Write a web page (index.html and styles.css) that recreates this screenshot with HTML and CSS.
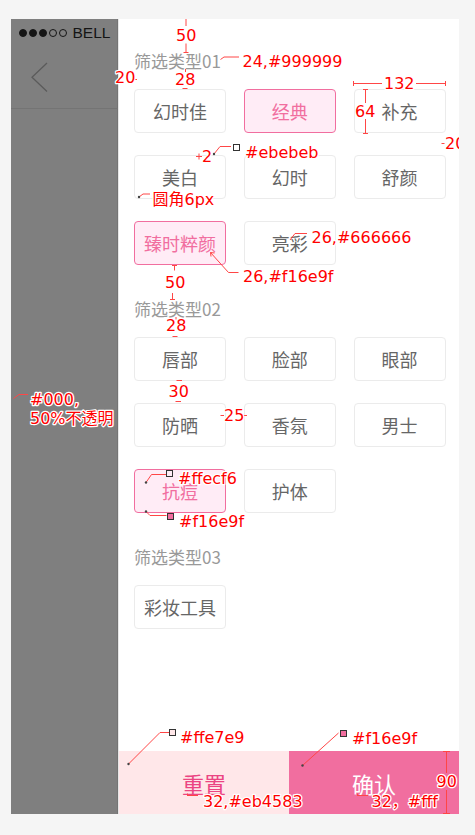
FILE: index.html
```html
<!DOCTYPE html>
<html lang="zh-CN">
<head>
<meta charset="utf-8">
<title>筛选</title>
<link rel="stylesheet" href="styles.css">
</head>
<body>
<div class="screen">
  <div class="backdrop">
    <div class="statusbar">
      <span class="signal"><i class="dot on"></i><i class="dot on"></i><i class="dot on"></i><i class="dot"></i><i class="dot"></i></span>
      <span class="carrier">BELL</span>
    </div>
    <div class="navbar">
      <svg class="back" width="17" height="31" viewBox="0 0 17 31"><polyline points="16,1 1,15.2 16,29.5"/></svg>
    </div>
  </div>

  <div class="panel">
    <div class="filters">
      <section class="group">
        <h3 class="group-title">筛选类型01</h3>
        <div class="chips">
          <span class="chip">幻时佳</span>
          <span class="chip is-active">经典</span>
          <span class="chip">补充</span>
          <span class="chip">美白</span>
          <span class="chip">幻时</span>
          <span class="chip">舒颜</span>
          <span class="chip is-active">臻时粹颜</span>
          <span class="chip">亮彩</span>
        </div>
      </section>
      <section class="group">
        <h3 class="group-title">筛选类型02</h3>
        <div class="chips">
          <span class="chip">唇部</span>
          <span class="chip">脸部</span>
          <span class="chip">眼部</span>
          <span class="chip">防晒</span>
          <span class="chip">香氛</span>
          <span class="chip">男士</span>
          <span class="chip is-active">抗痘</span>
          <span class="chip">护体</span>
        </div>
      </section>
      <section class="group">
        <h3 class="group-title">筛选类型03</h3>
        <div class="chips">
          <span class="chip">彩妆工具</span>
        </div>
      </section>
    </div>
    <div class="actions">
      <button class="btn btn-reset" type="button">重置</button>
      <button class="btn btn-confirm" type="button">确认</button>
    </div>
  </div>

  <svg class="notes" width="448" height="795" viewBox="11 19 448 795" aria-hidden="true">
    <g class="ln">
      <path d="M186 19V26M186 43.5V52.5M183.5 52.5H188.5"/>
      <path d="M220.5 59.5L224 57H239"/>
      <path d="M133.5 79.5H137"/>
      <path d="M185.5 69V72M182.5 88.5H187.5"/>
      <path d="M353.5 83.5H382M416 83.5H445.5M353.5 81V86M445.5 81V86"/>
      <path d="M365.5 89.5V103M365.5 119V133.5M363 89.5H368M363 133.5H368"/>
      <path d="M441.5 143.5H444.5"/>
      <path d="M196 156.5H202M199 153.5V159.5"/>
      <path d="M214 154L220 146.5H231"/>
      <path d="M139 197L143 194H150"/>
      <path d="M290 240L295 233.5H307"/>
      <path d="M210.5 252.5L228.5 272.5H238.5M210.5 252.5L211 256.5M210.5 252.5L214.5 253"/>
      <path d="M174.5 265.5V270.5M172 265.5H177"/>
      <path d="M172.5 293V299.5M170 299.5H175"/>
      <path d="M176 317V319.5M172.5 336.5H177.5"/>
      <path d="M176.5 380.5H182M175.5 401.5H181"/>
      <path d="M220.5 415.5H224M243.5 415.5H247"/>
      <path d="M13.5 398.5L19 394.5H28"/>
      <path d="M146 482.5L151.5 474.5H166"/>
      <path d="M146 511.5L150 515.5H166.5"/>
      <path d="M128.5 764L160 732.5H169"/>
      <path d="M302.5 765.5L338.5 733"/>
      <path d="M187.5 793.5V796M187.5 795.5H198"/>
      <path d="M357.5 793.5V796M357.5 795.5H368"/>
      <path d="M446.5 751.5V773M446.5 790V813.5M443 751.5H450M443 813.5H450"/>
    </g>
    <g class="pin">
      <circle cx="214" cy="154" r="1.2"/>
      <circle cx="139" cy="197" r="1.2"/>
      <circle cx="146" cy="482.5" r="1.2"/>
      <circle cx="146" cy="511.5" r="1.2"/>
      <circle cx="128.5" cy="764" r="1.2"/>
      <circle cx="302.5" cy="765.5" r="1.2"/>
    </g>
    <g class="swatch">
      <rect x="233.5" y="144.5" width="6" height="6" fill="#ffffff"/>
      <rect x="166.5" y="470.5" width="6" height="6" fill="#ffecf6"/>
      <rect x="167.5" y="513.5" width="6" height="6" fill="#f16e9f"/>
      <rect x="169.5" y="729.5" width="6" height="6" fill="#ffe7e9"/>
      <rect x="340.5" y="730.5" width="6" height="6" fill="#f16e9f"/>
    </g>
    <g class="tx">
      <text x="176" y="41">50</text>
      <text x="242.5" y="67.3">24,#999999</text>
      <text x="115" y="83">20</text>
      <text x="175" y="84.5">28</text>
      <text x="384" y="89">132</text>
      <text x="355" y="117">64</text>
      <text x="445" y="149">20</text>
      <text x="202" y="161.5">2</text>
      <text x="245" y="157.5">#ebebeb</text>
      <text x="152.5" y="205">圆角6px</text>
      <text x="311.5" y="242.5">26,#666666</text>
      <text x="243" y="282">26,#f16e9f</text>
      <text x="165" y="287.5">50</text>
      <text x="166" y="331">28</text>
      <text x="168.5" y="396.5">30</text>
      <text x="224" y="420.5">25</text>
      <text x="30" y="405">#000,</text>
      <text x="30" y="423.5">50%不透明</text>
      <text x="178" y="484">#ffecf6</text>
      <text x="179" y="527">#f16e9f</text>
      <text x="180" y="743">#ffe7e9</text>
      <text x="352" y="744">#f16e9f</text>
      <text x="203" y="806.5">32,#eb4583</text>
      <text x="371.5" y="806.5">32，#fff</text>
      <text x="436.5" y="786.5">90</text>
    </g>
  </svg>
</div>
</body>
</html>
```

FILE: styles.css
```css
* {
  box-sizing: border-box;
  margin: 0;
  padding: 0;
}

html,
body {
  background: #f5f5f5;
}

body {
  width: 475px;
  height: 835px;
  overflow: hidden;
  font-family: "Noto Sans CJK SC", "Noto Sans", sans-serif;
}

.screen {
  position: relative;
  display: flex;
  width: 448px;
  height: 795px;
  margin: 19px 0 0 11px;
  overflow: hidden;
  background: #fff;
}

/* dimmed page behind the drawer (#000 at 50%) */
.backdrop {
  flex: none;
  width: 107px;
  background: #7f7f7f;
  border-right: 1px solid #747474;
}

.statusbar {
  height: 28px;
  display: flex;
  align-items: center;
  padding-left: 8px;
}

.signal {
  display: flex;
  gap: 2px;
}

.dot {
  display: block;
  width: 8px;
  height: 8px;
  border-radius: 50%;
  border: 1px solid #151515;
}

.dot.on {
  background: #151515;
}

.carrier {
  margin-left: 5.5px;
  font-family: "Liberation Sans", Arial, sans-serif;
  font-size: 15.5px;
  line-height: 1;
  color: #151515;
}

.navbar {
  height: 62px;
  display: flex;
  align-items: center;
  padding-left: 20px;
  border-bottom: 1px solid #747474;
}

.back polyline {
  fill: none;
  stroke: #5b5b5b;
  stroke-width: 1.3;
}

/* drawer */
.panel {
  flex: 1;
  display: flex;
  flex-direction: column;
  border-left: 1px solid #e6e6e6;
  background: #fff;
}

.filters {
  flex: 1;
  padding: 33px 0 0 15px;
}

.group + .group {
  margin-top: 35px;
}

.group-title {
  font-size: 17px;
  line-height: 17px;
  font-weight: 400;
  color: #999999;
  margin-bottom: 20px;
}

.chips {
  display: grid;
  grid-template-columns: repeat(3, 92px);
  column-gap: 17.75px;
  row-gap: 22px;
}

.chip {
  height: 44px;
  display: flex;
  align-items: center;
  justify-content: center;
  border: 1px solid #ebebeb;
  border-radius: 4px;
  font-size: 18px;
  line-height: 1;
  color: #666666;
  padding-bottom: 1px;
}

.chip.is-active {
  border-color: #f16e9f;
  background: #ffecf6;
  color: #f16e9f;
}

.actions {
  display: flex;
  height: 63px;
}

.btn {
  flex: 1;
  border: 0;
  font-family: "Noto Sans CJK SC", sans-serif;
  font-size: 22px;
  line-height: 1;
  cursor: pointer;
}

.btn-reset {
  background: #ffe7e9;
  color: #eb4583;
}

.btn-confirm {
  background: #f16e9f;
  color: #fff;
}

/* design annotations */
.notes {
  position: absolute;
  left: 0;
  top: 0;
  pointer-events: none;
}

.notes .ln path {
  fill: none;
  stroke: #ff4646;
  stroke-width: 1;
}

.notes .pin circle {
  fill: #444;
}

.notes .swatch rect {
  stroke: #333;
  stroke-width: 1;
}

.notes .tx text {
  font-family: "DejaVu Sans", "Noto Sans CJK SC", sans-serif;
  font-size: 16px;
  fill: #ff0000;
  stroke: #fff;
  stroke-width: 2.5px;
  stroke-linejoin: round;
  paint-order: stroke;
}
```
